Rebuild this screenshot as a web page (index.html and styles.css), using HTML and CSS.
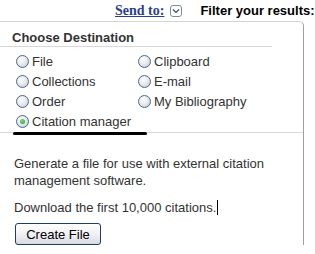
FILE: index.html
```html
<!DOCTYPE html>
<html lang="en">
<head>
    <meta charset="UTF-8">
    <title>Send to</title>
    <link rel="stylesheet" href="styles.css">
</head>
<body>
    <div class="topbar">
        <a class="send-to" href="#">Send to:</a>
        <span class="drop-icon">
            <svg width="12" height="12" viewBox="0 0 12 12">
                <rect x="0.5" y="0.5" width="11" height="11" rx="2.5" fill="#fff" stroke="#7f8c9f"/>
                <path d="M3 4.5 L6 7.5 L9 4.5" fill="none" stroke="#3a4a6a" stroke-width="1.2"/>
            </svg>
        </span>
        <span class="filter-title">Filter your results:</span>
    </div>

    <div class="panel">
        <h3 class="panel-title">Choose Destination</h3>

        <div class="options">
            <label class="option"><input type="radio" name="dest"> File</label>
            <label class="option"><input type="radio" name="dest"> Clipboard</label>
            <label class="option"><input type="radio" name="dest"> Collections</label>
            <label class="option"><input type="radio" name="dest"> E-mail</label>
            <label class="option"><input type="radio" name="dest"> Order</label>
            <label class="option"><input type="radio" name="dest"> My Bibliography</label>
            <label class="option"><input type="radio" name="dest" checked> Citation manager</label>
            <span class="marker"></span>
        </div>

        <div class="details">
            <p>Generate a file for use with external citation management software.</p>
            <p class="download">Download the first 10,000 citations.<span class="caret"></span></p>
            <button type="button">Create File</button>
        </div>
    </div>
</body>
</html>
```

FILE: styles.css
```css
* {
    box-sizing: border-box;
    margin: 0;
    padding: 0;
}

body {
    font-family: 'Liberation Sans', Arial, sans-serif;
    font-size: 13px;
    color: #333;
    background: #fff;
    width: 315px;
    overflow: hidden;
}

.topbar {
    display: flex;
    align-items: center;
    height: 21px;
    padding-left: 115px;
    white-space: nowrap;
}

.send-to {
    font-family: 'Liberation Serif', 'Times New Roman', serif;
    font-weight: bold;
    font-size: 14px;
    color: #2b3f8c;
    text-decoration: underline;
}

.drop-icon {
    display: flex;
    margin-left: 6px;
}

.filter-title {
    margin-left: 18px;
    font-weight: bold;
    color: #000;
}

.panel {
    width: 304px;
    border-top: 1px solid #d4d4d4;
    border-right: 1px solid #a0a0a0;
    border-top-right-radius: 5px;
}

.panel-title {
    width: 272px;
    padding: 8px 0 0 12px;
    line-height: 16px;
    font-size: 13px;
    color: #333;
    border-bottom: 1px solid #d8d8d8;
}

.options {
    position: relative;
    display: grid;
    grid-template-columns: 122px 1fr;
    margin-top: 4px;
    padding: 0 0 1px 16px;
    border-bottom: 1px solid #d8d8d8;
}

.option {
    display: flex;
    align-items: center;
    height: 20px;
    gap: 3px;
    color: #333;
}

.option input {
    appearance: none;
    width: 13px;
    height: 13px;
    border: 1px solid #4a6a8a;
    border-radius: 50%;
    background: radial-gradient(circle at 40% 35%, #fff 0%, #e8eaee 45%, #bfc6d0 100%);
    display: grid;
    place-items: center;
}

.option input:checked::after {
    content: "";
    width: 5px;
    height: 5px;
    border-radius: 50%;
    background: radial-gradient(circle at 40% 35%, #7ee07e, #1f9a2a);
}

.marker {
    position: absolute;
    left: 13px;
    bottom: -3px;
    width: 134px;
    height: 3px;
    background: #000;
    border-radius: 2px;
}

.details {
    padding: 22px 0 0 14px;
}

.details p {
    line-height: 17px;
    width: 270px;
}

.details .download {
    margin-top: 10px;
}

.caret {
    display: inline-block;
    width: 1px;
    height: 15px;
    background: #000;
    vertical-align: -3px;
    margin-left: 1px;
}

button {
    margin: 7px 0 0 1px;
    width: 86px;
    height: 22px;
    font-family: 'Liberation Sans', Arial, sans-serif;
    font-size: 13px;
    color: #000;
    border: 1px solid #1f3d66;
    border-radius: 3px;
    background: linear-gradient(#ffffff, #f1f1f5 50%, #d9dbe3);
}
```
